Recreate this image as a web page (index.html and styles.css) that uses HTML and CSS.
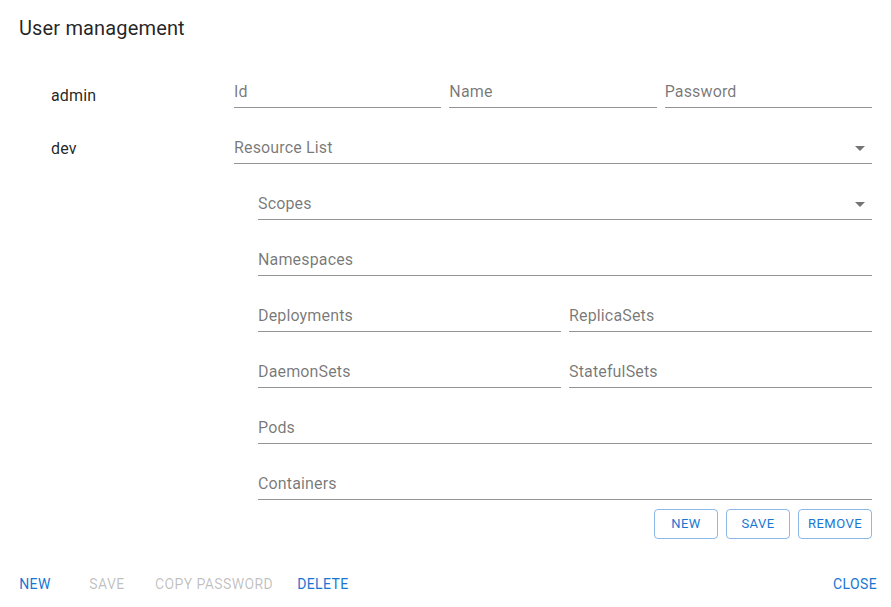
FILE: index.html
```html
<!DOCTYPE html>
<html lang="en">
<head>
<meta charset="utf-8">
<title>User management</title>
<link rel="stylesheet" href="styles.css">
</head>
<body>
<div class="dialog">
  <h2 class="title">User management</h2>
  <div class="content">
    <ul class="users">
      <li>admin</li>
      <li>dev</li>
    </ul>
    <div class="form">
      <div class="row three">
        <div class="field">Id</div>
        <div class="field">Name</div>
        <div class="field">Password</div>
      </div>
      <div class="field select">Resource List
        <svg class="arrow" viewBox="0 0 24 24" width="24" height="24"><path d="M7 10l5 5 5-5z"/></svg>
      </div>
      <div class="nested">
        <div class="field select">Scopes
          <svg class="arrow" viewBox="0 0 24 24" width="24" height="24"><path d="M7 10l5 5 5-5z"/></svg>
        </div>
        <div class="field">Namespaces</div>
        <div class="row two">
          <div class="field">Deployments</div>
          <div class="field">ReplicaSets</div>
        </div>
        <div class="row two">
          <div class="field">DaemonSets</div>
          <div class="field">StatefulSets</div>
        </div>
        <div class="field">Pods</div>
        <div class="field">Containers</div>
        <div class="small-actions">
          <button class="outlined">New</button>
          <button class="outlined">Save</button>
          <button class="outlined">Remove</button>
        </div>
      </div>
    </div>
  </div>
  <div class="actions">
    <button class="text">New</button>
    <button class="text" disabled>Save</button>
    <button class="text" disabled>Copy password</button>
    <button class="text">Delete</button>
    <span class="spacer"></span>
    <button class="text">Close</button>
  </div>
</div>
</body>
</html>
```
FILE: styles.css
```css
* { box-sizing: border-box; }
html, body {
  margin: 0;
  padding: 0;
  background: #fff;
  font-family: Roboto, "Liberation Sans", Arial, sans-serif;
  color: rgba(0, 0, 0, 0.87);
}
.dialog {
  width: 891px;
  height: 607px;
  display: flex;
  flex-direction: column;
}
.title {
  margin: 0;
  padding: 12px 19px 0;
  font-size: 20px;
  line-height: 32px;
  font-weight: 400;
  letter-spacing: 0.0075em;
  color: rgba(0, 0, 0, 0.87);
}
.content {
  margin-top: 8px;
  padding-left: 20px;
  display: grid;
  grid-template-columns: 206px 638px;
  column-gap: 8px;
  align-items: start;
}
.users {
  list-style: none;
  margin: 0;
  padding: 18px 0 0;
}
.users li {
  padding: 14px 0 14px 31px;
  font-size: 16px;
  line-height: 24px;
  letter-spacing: 0.00938em;
  color: rgba(0, 0, 0, 0.87);
}
.users li + li {
  padding-top: 15px;
  padding-bottom: 13px;
}
.form {
  display: flex;
  flex-direction: column;
}
.row {
  display: grid;
  column-gap: 8px;
}
.row.three { grid-template-columns: 1fr 1fr 1fr; }
.row.two { grid-template-columns: 1fr 1fr; }
.field {
  position: relative;
  padding: 30px 0 5px;
  font-size: 16px;
  line-height: 20px;
  letter-spacing: 0.00938em;
  color: rgba(0, 0, 0, 0.54);
  border-bottom: 1px solid rgba(0, 0, 0, 0.42);
}
.arrow {
  position: absolute;
  right: 0;
  top: 28px;
  fill: rgba(0, 0, 0, 0.54);
}
.nested {
  padding-left: 24px;
  display: flex;
  flex-direction: column;
}
.small-actions {
  display: flex;
  justify-content: flex-end;
  gap: 8px;
  margin-top: 9px;
}
button {
  font-family: Roboto, "Liberation Sans", Arial, sans-serif;
  font-weight: 400;
  text-transform: uppercase;
  background: transparent;
  cursor: pointer;
  margin: 0;
}
.outlined {
  min-width: 64px;
  height: 30px;
  padding: 3px 9px;
  font-size: 13px;
  line-height: 22px;
  letter-spacing: 0.46px;
  color: #1976d2;
  border: 1px solid rgba(25, 118, 210, 0.5);
  border-radius: 4px;
}
.actions {
  margin-top: 27px;
  padding: 0 4px 0 3px;
  display: flex;
  align-items: center;
  gap: 8px;
}
.spacer { flex: 1; }
.text {
  min-width: 64px;
  padding: 6px 8px;
  font-size: 14px;
  line-height: 24px;
  letter-spacing: 0.4px;
  color: #1976d2;
  border: 0;
  border-radius: 4px;
}
.text:disabled {
  color: rgba(0, 0, 0, 0.26);
  cursor: default;
}
```
